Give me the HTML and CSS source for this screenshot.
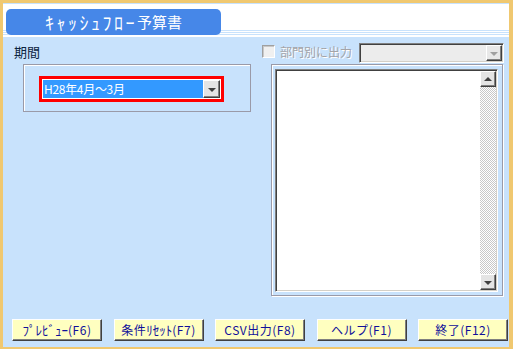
FILE: index.html
```html
<!DOCTYPE html>
<html lang="ja">
<head>
<meta charset="utf-8">
<title>ｷｬｯｼｭﾌﾛｰ予算書</title>
<link rel="stylesheet" href="styles.css">
</head>
<body>
<div class="window">
  <div class="header">
    <div class="title"><span class="kana">ｷｬｯｼｭﾌﾛｰ</span>予算書</div>
  </div>
  <div class="panel">
    <div class="main">
      <div class="left">
        <div class="label">期間</div>
        <div class="group">
          <div class="select">
            <div class="field">H28年4月～3月</div>
            <div class="dd"><span class="arrow-down"></span></div>
          </div>
        </div>
      </div>
      <div class="right">
        <div class="opt-row">
          <span class="checkbox"></span>
          <span class="opt-label">部門別に出力</span>
          <div class="combo">
            <div class="combo-field"></div>
            <div class="dd dd-disabled"><span class="arrow-down"></span></div>
          </div>
        </div>
        <div class="list-frame">
          <div class="listbox">
            <div class="list-body"></div>
            <div class="scrollbar">
              <div class="sb-btn"><span class="arrow-up"></span></div>
              <div class="sb-track"></div>
              <div class="sb-btn"><span class="arrow-down"></span></div>
            </div>
          </div>
        </div>
      </div>
    </div>
    <div class="buttons">
      <div class="btn"><span class="hk">ﾌﾟﾚﾋﾞｭｰ</span>(F6)</div>
      <div class="btn">条件<span class="hk">ﾘｾｯﾄ</span>(F7)</div>
      <div class="btn">CSV出力(F8)</div>
      <div class="btn">ヘルプ(F1)</div>
      <div class="btn">終了(F12)</div>
    </div>
  </div>
</div>
</body>
</html>
```
FILE: styles.css
```css
* { box-sizing: border-box; }
html, body { margin: 0; padding: 0; background: #fff; }
body { font-family: "Noto Sans CJK JP", "Noto Sans", sans-serif; font-size: 12px; }

.window {
  width: 513px;
  height: 349px;
  border-style: solid;
  border-color: #f0c870;
  border-width: 3px 4px 2px 3px;
  display: flex;
  flex-direction: column;
  background: #c8e2fc;
}

.header {
  height: 34px;
  flex: none;
  border-top: 1px solid #c8e2fc;
  padding: 5px 0 0 3px;
  background: linear-gradient(to bottom,
    #fff 0 26px, #c8e2fc 26px 27px, #fff 27px 28px,
    #c8e2fc 28px 29px, #fff 29px 30px, #c8e2fc 30px 31px, #fff 31px 33px);
}

.title {
  width: 215px;
  height: 26px;
  background: #4687e8;
  border-radius: 5px;
  color: #fff;
  font-size: 15px;
  line-height: 26px;
  text-align: center;
  white-space: nowrap;
}
.title .kana { font-size: 18px; letter-spacing: 2.5px; vertical-align: top; }

.panel {
  flex: 1;
  display: flex;
  flex-direction: column;
  background: #c8e2fc;
}

.main { flex: 1; display: flex; }

.left { width: 259px; padding: 7px 0 0 11px; }

.label {
  font-size: 13px;
  line-height: 16px;
  color: #0c2440;
}

.group {
  margin: 4px 0 0 9px;
  width: 228px;
  height: 48px;
  border: 1px solid #9a9aa8;
  box-shadow: inset 1px 1px 0 #fff;
  padding: 11px 0 0 15px;
}

.select {
  width: 185px;
  height: 26px;
  border: 3px solid #ff0000;
  padding: 1px;
  background: #fff;
  display: flex;
}
.field {
  flex: 1;
  background: #3399ff;
  color: #fff;
  font-size: 12px;
  line-height: 18px;
  padding-left: 1px;
  letter-spacing: -0.3px;
  white-space: nowrap;
}

.dd {
  width: 17px;
  height: 18px;
  background: #e4e4e4;
  border: 1px solid;
  border-color: #fff #404040 #404040 #fff;
  box-shadow: inset -1px -1px 0 #808080;
  display: flex;
  align-items: center;
  justify-content: center;
}
.arrow-down, .arrow-up {
  width: 0; height: 0;
  border-left: 4px solid transparent;
  border-right: 4px solid transparent;
}
.arrow-down { border-top: 4px solid #404040; margin-top: 1px; }
.arrow-up { border-bottom: 4px solid #404040; margin-top: -1px; }

.right { flex: 1; padding-top: 6px; }

.opt-row { display: flex; align-items: flex-start; height: 20px; }

.checkbox {
  width: 13px;
  height: 13px;
  margin-top: 2px;
  background: #f0f0f0;
  border: 1px solid;
  border-color: #a0a0a0 #fff #fff #a0a0a0;
  box-shadow: inset 1px 1px 0 #c8c8c8;
}
.opt-label {
  margin-left: 5px;
  font-size: 12px;
  line-height: 18px;
  color: #a4a4a8;
  text-shadow: 1px 1px 0 #fff;
  white-space: nowrap;
}
.combo {
  margin-left: 7px;
  width: 145px;
  height: 20px;
  background: #ececec;
  border: 1px solid;
  border-color: #808080 #fff #fff #808080;
  box-shadow: inset 1px 1px 0 #404040, inset -1px -1px 0 #d4d0c8;
  display: flex;
  padding: 1px;
}
.combo-field { flex: 1; }
.dd-disabled { height: 16px; width: 16px; background: #e8e8e8; }
.dd-disabled .arrow-down { border-top-color: #a0a0a0; }

.list-frame {
  margin: 1px 0 0 9px;
  width: 232px;
  height: 232px;
  border: 1px solid #9a9aa8;
  box-shadow: inset 1px 1px 0 #fff, 1px 1px 0 #fff;
  padding: 4px 4px 3px 3px;
}
.listbox {
  height: 100%;
  background: #fff;
  border: 1px solid;
  border-color: #808080 #fff #fff #808080;
  box-shadow: inset 1px 1px 0 #404040, inset -1px -1px 0 #d4d0c8;
  padding: 1px;
  display: flex;
}
.list-body { flex: 1; }
.scrollbar { width: 16px; display: flex; flex-direction: column; }
.sb-btn {
  height: 16px;
  flex: none;
  background: #e4e4e4;
  border: 1px solid;
  border-color: #fff #404040 #404040 #fff;
  box-shadow: inset -1px -1px 0 #808080;
  display: flex;
  align-items: center;
  justify-content: center;
}
.sb-track {
  flex: 1;
  background: repeating-conic-gradient(#c8c8c8 0 25%, #fff 0 50%) 0 0 / 2px 2px;
}

.buttons {
  flex: none;
  display: flex;
  gap: 11.5px;
  padding: 0 0 6px 9px;
}
.btn {
  width: 90px;
  height: 22px;
  background: #ffffc0;
  border: 1px solid;
  border-color: #fff #404040 #404040 #fff;
  box-shadow: inset -1px -1px 0 #808080;
  color: #10109a;
  font-size: 12px;
  line-height: 20px;
  text-align: center;
  letter-spacing: 0.5px;
  white-space: nowrap;
}
.btn .hk { font-size: 13px; letter-spacing: 0; }
```
